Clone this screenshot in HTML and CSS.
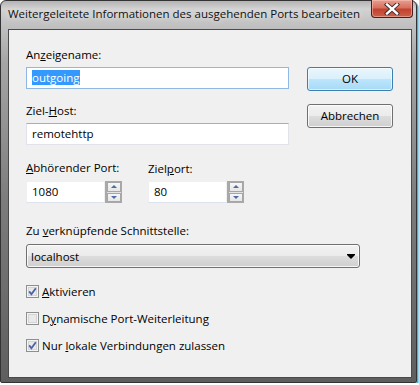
FILE: index.html
```html
<!DOCTYPE html>
<html lang="de">
<head>
    <meta charset="UTF-8">
    <title>Weitergeleitete Informationen des ausgehenden Ports bearbeiten</title>
    <link rel="stylesheet" href="styles.css">
</head>
<body>
    <div class="window">
        <div class="titlebar">
            <span class="title">Weitergeleitete Informationen des ausgehenden Ports bearbeiten</span>
            <div class="close">
                <svg width="16" height="12" viewBox="0 0 16 12">
                    <path d="M3 1.5 L13 10.5 M13 1.5 L3 10.5" stroke="#3a2a2a" stroke-width="4.2" stroke-linecap="square"/>
                    <path d="M3 1.5 L13 10.5 M13 1.5 L3 10.5" stroke="#ffffff" stroke-width="2.4" stroke-linecap="square"/>
                </svg>
            </div>
        </div>
        <div class="client">
            <div class="top-row">
                <div class="fields">
                    <div class="label">An<u>z</u>eigename:</div>
                    <div class="textbox focused"><span class="selected">outgoing</span></div>
                    <div class="label gap">Ziel-<u>H</u>ost:</div>
                    <div class="textbox">remotehttp</div>
                    <div class="ports">
                        <div class="port">
                            <div class="label"><u>A</u>bhörender Port:</div>
                            <div class="spin">
                                <div class="spin-text">1080</div>
                                <div class="spin-buttons">
                                    <div class="spin-btn"><span class="arrow-up"></span></div>
                                    <div class="spin-btn"><span class="arrow-down"></span></div>
                                </div>
                            </div>
                        </div>
                        <div class="port second">
                            <div class="label">Ziel<u>p</u>ort:</div>
                            <div class="spin">
                                <div class="spin-text">80</div>
                                <div class="spin-buttons">
                                    <div class="spin-btn"><span class="arrow-up"></span></div>
                                    <div class="spin-btn"><span class="arrow-down"></span></div>
                                </div>
                            </div>
                        </div>
                    </div>
                </div>
                <div class="buttons">
                    <div class="button default">OK</div>
                    <div class="button">Abbrechen</div>
                </div>
            </div>

            <div class="label iface">Zu <u>v</u>erknüpfende Schnittstelle:</div>
            <div class="combo">
                <span>localhost</span>
                <svg width="8" height="5" viewBox="0 0 8 5"><path d="M0 0 H8 V1 L4 5 L0 1 Z" fill="#000"/></svg>
            </div>

            <div class="checks">
                <div class="check">
                    <svg class="box" width="13" height="13" viewBox="0 0 13 13">
                        <rect x="0.5" y="0.5" width="12" height="12" fill="#f4f4f4" stroke="#8e8f8f"/>
                        <rect x="2.5" y="2.5" width="8" height="8" fill="#e9e9e9" stroke="#d4d4d4"/>
                        <path d="M3.2 6.4 L5.4 9.2 L9.8 3.2" fill="none" stroke="#4a62a8" stroke-width="1.8"/>
                    </svg>
                    <span><u>A</u>ktivieren</span>
                </div>
                <div class="check">
                    <svg class="box" width="13" height="13" viewBox="0 0 13 13">
                        <rect x="0.5" y="0.5" width="12" height="12" fill="#f4f4f4" stroke="#8e8f8f"/>
                        <rect x="2.5" y="2.5" width="8" height="8" fill="#e9e9e9" stroke="#d4d4d4"/>
                    </svg>
                    <span>D<u>y</u>namische Port-Weiterleitung</span>
                </div>
                <div class="check">
                    <svg class="box" width="13" height="13" viewBox="0 0 13 13">
                        <rect x="0.5" y="0.5" width="12" height="12" fill="#f4f4f4" stroke="#8e8f8f"/>
                        <rect x="2.5" y="2.5" width="8" height="8" fill="#e9e9e9" stroke="#d4d4d4"/>
                        <path d="M3.2 6.4 L5.4 9.2 L9.8 3.2" fill="none" stroke="#4a62a8" stroke-width="1.8"/>
                    </svg>
                    <span>Nur <u>l</u>okale Verbindungen zulassen</span>
                </div>
            </div>
        </div>
    </div>
</body>
</html>
```

FILE: styles.css
```css
body {
    margin: 0;
    background-color: #ffffff;
    font-family: "Open Sans", "Noto Sans", sans-serif;
    font-size: 11.5px;
    color: #000;
}
u {
    text-decoration: underline;
    text-underline-offset: 1px;
}
.window {
    width: 417px;
    height: 383px;
    box-sizing: border-box;
    border: 1px solid #333;
    border-radius: 6px 6px 2px 2px;
    background: linear-gradient(to bottom, #b4b4b4 0, #d2d2d2 8px, #c4c4c4 20px, #a6a6a6 60px, #7c7c7c 200px, #5e5e5e 100%);
    box-shadow: 1px 1px 0 #3ab6de, 2px 2px 0 #8fd6ee;
}
.titlebar {
    height: 28px;
    display: flex;
    align-items: flex-start;
    justify-content: space-between;
}
.title {
    margin: 5px 0 0 7px;
    line-height: 16px;
    color: #111;
    text-shadow: 0 0 6px rgba(255, 255, 255, 0.9);
}
.close {
    width: 42px;
    height: 18px;
    margin: -1px 3px 0 0;
    box-sizing: border-box;
    border: 1px solid #4a1e1e;
    border-top: none;
    border-radius: 0 0 4px 4px;
    background: linear-gradient(to bottom, #e6a091 0, #d7705f 45%, #c4412d 55%, #c9624c 100%);
    box-shadow: inset 0 0 0 1px rgba(255, 200, 190, 0.5);
    display: flex;
    align-items: center;
    justify-content: center;
}
.client {
    width: 404px;
    height: 349px;
    margin-left: 7px;
    box-sizing: border-box;
    border: 1px solid #4a4a4a;
    background-color: #f0f0f0;
    padding: 17px 0 0 17px;
}
.top-row {
    display: flex;
}
.fields {
    width: 263px;
}
.label {
    line-height: 15px;
    height: 15px;
}
.label.gap {
    margin-top: 14px;
}
.textbox {
    height: 22px;
    margin-top: 5px;
    box-sizing: border-box;
    border: 1px solid #e2e3ea;
    border-top-color: #abadb3;
    background-color: #fff;
    padding: 0 0 0 5px;
    line-height: 19px;
}
.textbox.focused {
    border: 1px solid #8fb8e2;
    padding-left: 5px;
}
.selected {
    background-color: #3399ff;
    color: #fff;
    display: inline-block;
    line-height: 15px;
    padding: 0 1px 0 0;
}
.ports {
    display: flex;
    margin-top: 15px;
}
.port {
    width: 96px;
}
.port.second {
    margin-left: 26px;
    padding-top: 1px;
}
.port.second .spin {
    margin-top: 5px;
}
.spin {
    display: flex;
    margin-top: 6px;
    height: 22px;
}
.spin-text {
    width: 79px;
    box-sizing: border-box;
    background-color: #fff;
    border: 1px solid #f0f0f0;
    border-bottom-color: #dde3ec;
    padding-left: 5px;
    line-height: 20px;
}
.spin-buttons {
    width: 17px;
    box-sizing: border-box;
    border: 1px solid #a9a9a9;
    border-left: 2px solid #a9a9a9;
    display: flex;
    flex-direction: column;
    gap: 1px;
    background-color: #e3e3e3;
}
.spin-btn {
    flex: 1;
    border: 1px solid #a6a6a6;
    background: linear-gradient(to bottom, #f6f6f6, #e6e6e6);
    display: flex;
    align-items: center;
    justify-content: center;
}
.arrow-up {
    width: 0;
    height: 0;
    border-left: 3px solid transparent;
    border-right: 3px solid transparent;
    border-bottom: 3px solid #4e6aa8;
}
.arrow-down {
    width: 0;
    height: 0;
    border-left: 3px solid transparent;
    border-right: 3px solid transparent;
    border-top: 3px solid #4e6aa8;
}
.buttons {
    margin-left: 18px;
    padding-top: 20px;
    display: flex;
    flex-direction: column;
    gap: 13px;
}
.button {
    width: 86px;
    height: 24px;
    box-sizing: border-box;
    border: 1px solid #707070;
    border-radius: 3px;
    background: linear-gradient(to bottom, #f2f2f2 0, #ebebeb 50%, #dddddd 50%, #cfcfcf 100%);
    box-shadow: inset 0 0 0 1px rgba(255, 255, 255, 0.8);
    text-align: center;
    line-height: 21px;
}
.button.default {
    border-color: #3c7fb1;
    background: linear-gradient(to bottom, #eaf6fd 0, #d9f0fc 50%, #bee6fd 50%, #a7d9f5 100%);
    box-shadow: inset 0 0 0 1px rgba(255, 255, 255, 0.6);
}
.label.iface {
    margin-top: 20px;
}
.combo {
    width: 334px;
    height: 24px;
    margin-top: 6px;
    box-sizing: border-box;
    border: 1px solid #707070;
    border-radius: 3px;
    background: linear-gradient(to bottom, #f2f2f2 0, #ebebeb 50%, #dddddd 50%, #cfcfcf 100%);
    box-shadow: inset 0 0 0 1px rgba(255, 255, 255, 0.8);
    display: flex;
    align-items: center;
    justify-content: space-between;
    padding: 0 4px 0 4px;
}
.checks {
    margin-top: 16px;
    display: flex;
    flex-direction: column;
    gap: 12px;
}
.check {
    display: flex;
    align-items: flex-start;
    height: 15px;
    line-height: 15px;
}
.check .box {
    margin-top: 1px;
    margin-right: 3px;
}
```
